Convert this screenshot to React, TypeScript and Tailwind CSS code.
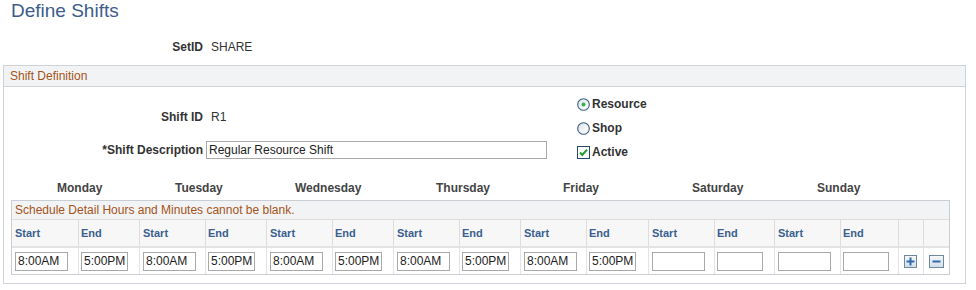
const days = [
  { day: 'Monday', pad: 'pl-[46px]', w: ['w-[66px]', 'w-[61px]'], start: '8:00AM', end: '5:00PM' },
  { day: 'Tuesday', pad: 'pl-[36px]', w: ['w-[66px]', 'w-[61px]'], start: '8:00AM', end: '5:00PM' },
  { day: 'Wednesday', pad: 'pl-[29px]', w: ['w-[66px]', 'w-[61px]'], start: '8:00AM', end: '5:00PM' },
  { day: 'Thursday', pad: 'pl-[43px]', w: ['w-[66px]', 'w-[61px]'], start: '8:00AM', end: '5:00PM' },
  { day: 'Friday', pad: 'pl-[43px]', w: ['w-[66px]', 'w-[62px]'], start: '8:00AM', end: '5:00PM' },
  { day: 'Saturday', pad: 'pl-[44px]', w: ['w-[66px]', 'w-[60px]'], start: '', end: '' },
  { day: 'Sunday', pad: 'pl-[43px]', w: ['w-[66px]', 'w-[58px]'], start: '', end: '' },
];

function Radio({ checked }: { checked?: boolean }) {
  return (
    <svg width="13" height="13" viewBox="0 0 13 13" className="shrink-0">
      <defs>
        <linearGradient id="rg" x1="0" y1="0" x2="1" y2="1">
          <stop offset="0" stopColor="#dfe5eb" />
          <stop offset="1" stopColor="#ffffff" />
        </linearGradient>
      </defs>
      <circle cx="6.5" cy="6.5" r="5.8" fill="url(#rg)" stroke="#3f5e7e" strokeWidth="1.1" />
      {checked && <circle cx="6.5" cy="6.5" r="2" fill="#33b04a" />}
    </svg>
  );
}

function Checkbox() {
  return (
    <svg width="13" height="13" viewBox="0 0 13 13" className="shrink-0">
      <rect x="0.5" y="0.5" width="12" height="12" fill="#fff" stroke="#23496c" />
      <path d="M3 6.5 L5.3 9 L10 3.6" fill="none" stroke="#1f9e2a" strokeWidth="2" />
    </svg>
  );
}

function RowButton({ minus }: { minus?: boolean }) {
  const w = minus ? 15 : 13;
  return (
    <svg width={w} height="13" viewBox={`0 0 ${w} 13`}>
      <defs>
        <linearGradient id="bg" x1="0" y1="0" x2="0" y2="1">
          <stop offset="0" stopColor="#f6f8fa" />
          <stop offset="1" stopColor="#d3dde6" />
        </linearGradient>
      </defs>
      <rect x="0.5" y="0.5" width={w - 1} height="12" fill="url(#bg)" stroke="#6e899f" />
      <rect x={w / 2 - 4} y="5.5" width="8" height="2" fill="#2f6aaa" />
      {!minus && <rect x={w / 2 - 1} y="2.5" width="2" height="8" fill="#2f6aaa" />}
    </svg>
  );
}

function TimeBox({ value, w }: { value: string; w: string }) {
  return (
    <div className={`${w} h-[19px] border border-[#a9a9a9] bg-white pl-[2px] text-[12px] leading-[17px] text-[#222]`}>
      {value}
    </div>
  );
}

export default function App() {
  return (
    <div className="w-[976px] h-[290px] overflow-hidden bg-white font-['Liberation_Sans',Arial,sans-serif] text-[12px] text-[#333]">
      {/* title */}
      <div className="h-[22px] pl-[11px] text-[19px] leading-[22px] text-[#3d5d8b]">Define Shifts</div>

      {/* SetID */}
      <div className="mt-[18px] flex h-[14px] leading-[14px]">
        <div className="w-[203px] text-right font-bold">SetID</div>
        <div className="ml-[8px]">SHARE</div>
      </div>

      {/* Shift Definition section */}
      <div className="ml-[3px] mt-[11px] w-[963px] border border-[#cdd3d9]">
        <div className="h-[21px] border-b border-[#cdd3d9] bg-[#f1f3f4] pl-[6px] leading-[20px] text-[#a5531a]">
          Shift Definition
        </div>

        <div className="flex">
          <div className="w-[573px] pt-[18px]">
            <div className="flex h-[24px] items-center">
              <div className="w-[199px] text-right font-bold">Shift ID</div>
              <div className="ml-[8px]">R1</div>
            </div>
            <div className="mt-[9px] flex h-[24px] items-center">
              <div className="w-[199px] text-right font-bold">*Shift Description</div>
              <div className="ml-[3px] h-[18px] w-[341px] border border-[#a9a9a9] pl-[2px] leading-[16px] text-[#222]">
                Regular Resource Shift
              </div>
            </div>
          </div>
          <div className="pt-[5px] font-bold">
            <div className="flex h-[24px] items-center gap-[2px]">
              <Radio checked />
              <span>Resource</span>
            </div>
            <div className="flex h-[24px] items-center gap-[2px]">
              <Radio />
              <span>Shop</span>
            </div>
            <div className="flex h-[24px] items-center gap-[2px]">
              <Checkbox />
              <span>Active</span>
            </div>
          </div>
        </div>

        <div className="pb-[8px] pl-[7px]">
          {/* day headings */}
          <div className="mt-[14px] flex h-[20px] items-center font-bold text-[#444]">
            {days.map((d, i) => (
              <div key={d.day} className={`${i === 0 ? 'w-[128px]' : i === 4 ? 'w-[128px]' : i === 5 ? 'w-[126px]' : i === 6 ? 'w-[124px]' : 'w-[127px]'} ${d.pad}`}>
                {d.day}
              </div>
            ))}
          </div>

          {/* schedule grid */}
          <div className="mt-[2px] w-[939px] border border-[#c8ced4]">
            <div className="h-[18px] bg-[#f1f3f4] pl-[3px] leading-[18px] text-[#a5531a]">
              Schedule Detail Hours and Minutes cannot be blank.
            </div>
            <div className="flex h-[27px] border-t border-[#dddddd] bg-[#f7f7f7] text-[11px] font-bold leading-[26px] text-[#3b6090]">
              {days.map((d, i) => (
                <div key={d.day} className="flex">
                  <div className={`${d.w[0]} ${i === 0 ? 'pl-[3px]' : 'border-l border-[#dddddd] pl-[3px]'}`}>Start</div>
                  <div className={`${d.w[1]} border-l border-[#dddddd] pl-[2px]`}>End</div>
                </div>
              ))}
              <div className="w-[25px] border-l border-[#dddddd]" />
              <div className="w-[26px] border-l border-[#dddddd]" />
            </div>
            <div className="flex h-[28px] items-center border-t-2 border-[#e3e3e3] bg-white">
              {days.map((d, i) => (
                <div key={d.day} className="flex h-full">
                  <div className={`${d.w[0]} flex items-center ${i === 0 ? 'pl-[3px]' : 'border-l border-[#e3e3e3] pl-[3px]'}`}>
                    <TimeBox value={d.start} w="w-[53px]" />
                  </div>
                  <div className={`${d.w[1]} flex items-center border-l border-[#e3e3e3] pl-[2px]`}>
                    <TimeBox value={d.end} w={i >= 5 ? 'w-[46px]' : 'w-[47px]'} />
                  </div>
                </div>
              ))}
              <div className="flex h-full w-[25px] items-center border-l border-[#e3e3e3] pl-[5px]">
                <RowButton />
              </div>
              <div className="flex h-full w-[26px] items-center border-l border-[#e3e3e3] pl-[5px]">
                <RowButton minus />
              </div>
            </div>
          </div>
        </div>
      </div>
    </div>
  );
}
